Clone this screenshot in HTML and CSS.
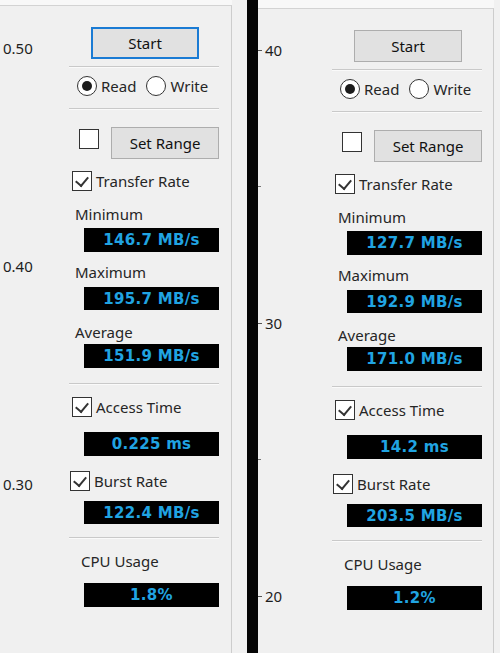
FILE: index.html
```html
<!DOCTYPE html>
<html>
<head>
<meta charset="utf-8">
<link rel="stylesheet" href="styles.css">
</head>
<body>
<div class="screen">
  <section class="pane pane-a">
    <div class="frame">
      <div class="axis">
        <div class="tick"><span class="num">0.50</span></div>
        <div class="tick gap-a"><span class="num">0.40</span></div>
        <div class="tick gap-a"><span class="num">0.30</span></div>
      </div>
      <div class="side">
        <div class="btn start focus">Start</div>
        <div class="sep s1"></div>
        <div class="radios">
          <span class="radio on"></span><span class="rtext">Read</span>
          <span class="radio"></span><span class="rtext">Write</span>
        </div>
        <div class="sep s2"></div>
        <div class="range-row">
          <span class="box"></span>
          <div class="btn range">Set Range</div>
        </div>
        <div class="check-row transfer"><span class="box checked"></span><span>Transfer Rate</span></div>
        <div class="label l-min">Minimum</div>
        <div class="val v-min">146.7 MB/s</div>
        <div class="label l-max">Maximum</div>
        <div class="val v-max">195.7 MB/s</div>
        <div class="label l-avg">Average</div>
        <div class="val v-avg">151.9 MB/s</div>
        <div class="sep s3"></div>
        <div class="check-row access"><span class="box checked"></span><span>Access Time</span></div>
        <div class="val v-acc">0.225 ms</div>
        <div class="check-row burst"><span class="box checked"></span><span>Burst Rate</span></div>
        <div class="val v-burst">122.4 MB/s</div>
        <div class="sep s4"></div>
        <div class="label l-cpu">CPU Usage</div>
        <div class="val v-cpu">1.8%</div>
      </div>
    </div>
    <div class="gutter"></div>
  </section>
  <div class="bar"></div>
  <section class="pane pane-b">
    <div class="frame">
      <div class="axis">
        <div class="tick"><span class="mark"></span><span class="num">40</span></div>
        <div class="minor m1"></div>
        <div class="tick gap-m"><span class="mark"></span><span class="num">30</span></div>
        <div class="minor m2"></div>
        <div class="tick gap-m"><span class="mark"></span><span class="num">20</span></div>
      </div>
      <div class="side">
        <div class="btn start">Start</div>
        <div class="sep s1"></div>
        <div class="radios">
          <span class="radio on"></span><span class="rtext">Read</span>
          <span class="radio"></span><span class="rtext">Write</span>
        </div>
        <div class="sep s2"></div>
        <div class="range-row">
          <span class="box"></span>
          <div class="btn range">Set Range</div>
        </div>
        <div class="check-row transfer"><span class="box checked"></span><span>Transfer Rate</span></div>
        <div class="label l-min">Minimum</div>
        <div class="val v-min">127.7 MB/s</div>
        <div class="label l-max">Maximum</div>
        <div class="val v-max">192.9 MB/s</div>
        <div class="label l-avg">Average</div>
        <div class="val v-avg">171.0 MB/s</div>
        <div class="sep s3"></div>
        <div class="check-row access"><span class="box checked"></span><span>Access Time</span></div>
        <div class="val v-acc">14.2 ms</div>
        <div class="check-row burst"><span class="box checked"></span><span>Burst Rate</span></div>
        <div class="val v-burst">203.5 MB/s</div>
        <div class="sep s4"></div>
        <div class="label l-cpu">CPU Usage</div>
        <div class="val v-cpu">1.2%</div>
      </div>
    </div>
    <div class="gutter"></div>
  </section>
</div>
</body>
</html>
```

FILE: styles.css
```css
html, body {
  margin: 0;
  padding: 0;
}
body {
  background: #f0f0f0;
  font-family: "Noto Sans", "Open Sans", sans-serif;
  font-size: 15px;
  color: #262626;
}
.screen {
  display: flex;
  width: 500px;
  height: 653px;
  overflow: hidden;
}
.pane {
  display: flex;
  height: 653px;
  background: #f8f8f8;
}
.pane-a { width: 247px; }
.pane-b { width: 242px; }
.bar {
  width: 11px;
  height: 653px;
  background: #050505;
}
.frame {
  display: flex;
  background: #f0f0f0;
  border-top: 1px solid #d3d3d3;
  border-right: 1px solid #cdcdcd;
  height: 700px;
}
.pane-a .frame { width: 231px; margin-top: 5px; }
.pane-b .frame { width: 235px; margin-top: 8px; }
.gutter {
  flex: 1;
  background: #f1f1f1;
}
.axis {
  display: flex;
  flex-direction: column;
  padding-top: 32px;
}
.pane-a .axis { width: 69px; }
.pane-b .axis { width: 74px; padding-top: 31px; }
.tick {
  display: flex;
  align-items: center;
  height: 20px;
  line-height: 20px;
  font-size: 15px;
  color: #1e1e1e;
}
.pane-a .tick { padding-left: 3px; }
.gap-a { margin-top: 198px; }
.mark {
  width: 4px;
  height: 1px;
  background: #555;
  margin-right: 3px;
}
.minor {
  width: 3px;
  height: 1px;
  background: #777;
}
.m1 { margin-top: 126px; }
.m2 { margin-top: 126px; }
.gap-m { margin-top: 126px; }
.side {
  width: 150px;
  display: flex;
  flex-direction: column;
  padding-top: 21px;
}
.btn {
  box-sizing: border-box;
  width: 108px;
  height: 32px;
  background: #e1e1e1;
  border: 1px solid #adadad;
  display: flex;
  align-items: center;
  justify-content: center;
  font-size: 15px;
  color: #111;
}
.start { margin-left: 22px; }
.focus {
  border: 2px solid #1a7bd4;
}
.sep {
  height: 1px;
  background: #c9c9c9;
  border-bottom: 1px solid #fafafa;
}
.s1 { margin-top: 7px; }
.s2 { margin-top: 12px; }
.s3 { margin-top: 15px; }
.s4 { margin-top: 13px; }
.radios {
  display: flex;
  align-items: center;
  height: 20px;
  margin-top: 8px;
  padding-left: 8px;
}
.radio {
  box-sizing: border-box;
  width: 20px;
  height: 20px;
  border-radius: 50%;
  border: 1px solid #333;
  background: #fff;
  display: flex;
  align-items: center;
  justify-content: center;
}
.radio.on::after {
  content: "";
  width: 10px;
  height: 10px;
  border-radius: 50%;
  background: #1c1c1c;
}
.rtext { margin-left: 4px; margin-right: 10px; }
.range-row {
  display: flex;
  align-items: flex-start;
  margin-top: 17px;
  height: 32px;
}
.range-row .box { margin-left: 10px; margin-top: 2px; }
.range { margin-left: 12px; }
.box {
  box-sizing: border-box;
  width: 20px;
  height: 20px;
  border: 1px solid #333;
  background: #fff;
  position: relative;
  flex: none;
}
.box.checked::after {
  content: "";
  position: absolute;
  left: 5px;
  top: 2px;
  width: 6px;
  height: 10px;
  border-right: 2px solid #333;
  border-bottom: 2px solid #333;
  transform: rotate(40deg);
}
.check-row {
  display: flex;
  align-items: center;
  height: 20px;
  gap: 4px;
}
.transfer { margin-top: 12px; padding-left: 3px; }
.access { margin-top: 12px; padding-left: 3px; }
.burst { margin-top: 15px; padding-left: 1px; }
.label {
  height: 20px;
  line-height: 20px;
  padding-left: 6px;
}
.l-min { margin-top: 13px; }
.l-max { margin-top: 10px; }
.l-avg { margin-top: 12px; }
.l-cpu { margin-top: 12px; padding-left: 12px; }
.val {
  box-sizing: border-box;
  margin-left: 15px;
  width: 135px;
  height: 24px;
  background: #000;
  color: #20a4e2;
  font-family: "DejaVu Sans", Verdana, sans-serif;
  font-weight: bold;
  font-size: 15px;
  letter-spacing: 0.3px;
  display: flex;
  align-items: center;
  justify-content: center;
}
.v-min { margin-top: 4px; }
.v-max { margin-top: 5px; height: 23px; }
.v-avg { margin-top: 2px; }
.v-acc { margin-top: 15px; }
.v-burst { margin-top: 10px; height: 23px; }
.v-cpu { margin-top: 12px; }
```
